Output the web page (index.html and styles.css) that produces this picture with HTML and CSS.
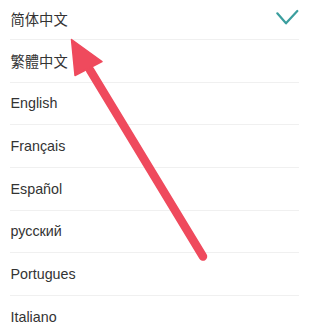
FILE: index.html
```html
<!DOCTYPE html>
<html>
<head>
<meta charset="utf-8">
<link rel="stylesheet" href="styles.css">
</head>
<body>
<div class="screen">
  <ul class="lang-list">
    <li class="lang-row">
      <span class="lang-name">简体中文</span>
      <svg class="check" width="24" height="16" viewBox="0 0 24 16">
        <path d="M1.3 4.3 L10 14.3 L21.3 2" fill="none" stroke="#3b9e9e" stroke-width="2.2" stroke-linecap="round" stroke-linejoin="round"/>
      </svg>
    </li>
    <li class="lang-row"><span class="lang-name">繁體中文</span></li>
    <li class="lang-row"><span class="lang-name">English</span></li>
    <li class="lang-row"><span class="lang-name">Français</span></li>
    <li class="lang-row"><span class="lang-name">Español</span></li>
    <li class="lang-row"><span class="lang-name">русский</span></li>
    <li class="lang-row"><span class="lang-name">Portugues</span></li>
    <li class="lang-row"><span class="lang-name">Italiano</span></li>
  </ul>
  <svg class="arrow" width="308" height="336" viewBox="0 0 308 336">
    <line x1="203" y1="256.5" x2="90" y2="70" stroke="#ef4a5d" stroke-width="8.5" stroke-linecap="round"/>
    <polygon points="71.5,39.5 102,61.5 75,75.5" fill="#ef4a5d" stroke="#ef4a5d" stroke-width="1.5" stroke-linejoin="round"/>
  </svg>
</div>
</body>
</html>
```
FILE: styles.css
```css
html, body {
  margin: 0;
  padding: 0;
  background: #ffffff;
}
.screen {
  position: relative;
  width: 308px;
  height: 336px;
  overflow: hidden;
}
.lang-list {
  list-style: none;
  margin: -2.67px 0 0 0;
  padding: 0;
}
.lang-row {
  box-sizing: border-box;
  height: 42.67px;
  margin: 0 9px 0 10px;
  border-bottom: 1px solid #f0f0f0;
  display: flex;
  align-items: center;
  justify-content: space-between;
}
.lang-name {
  font-family: "Liberation Sans", "Noto Sans CJK SC", sans-serif;
  font-size: 14.3px;
  color: #333333;
  padding-left: 0.5px;
}
.check {
  display: block;
  margin-right: -1px;
  margin-top: -3px;
}
.arrow {
  position: absolute;
  left: 0;
  top: 0;
}
```
